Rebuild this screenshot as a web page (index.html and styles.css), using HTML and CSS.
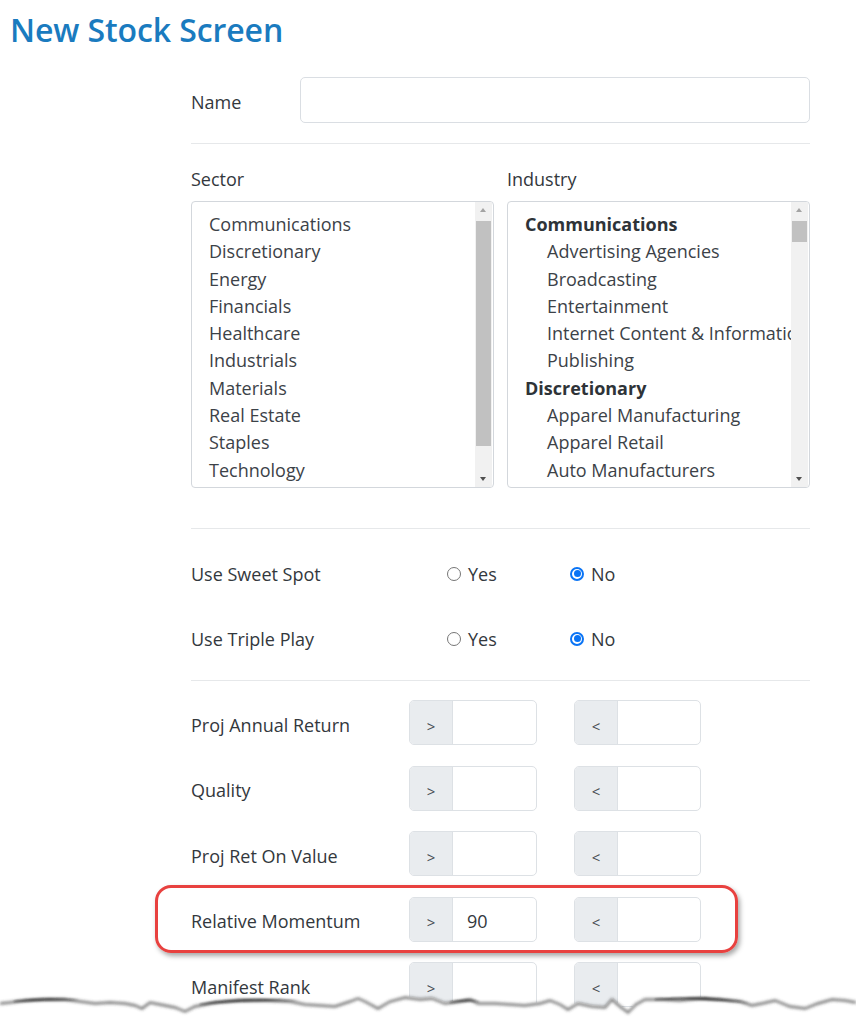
FILE: index.html
```html
<!DOCTYPE html>
<html lang="en">
<head>
<meta charset="utf-8">
<title>New Stock Screen</title>
<link rel="stylesheet" href="styles.css">
</head>
<body>
<div class="page">
  <h1 class="title">New Stock Screen</h1>
  <div class="form">
    <div class="name-row">
      <div class="lbl">Name</div>
      <div class="text-input"></div>
    </div>
    <div class="sep sep-name"></div>
    <div class="lists">
      <div class="list-col">
        <div class="lbl list-lbl">Sector</div>
        <div class="listbox">
          <div class="options">
            <div class="opt">Communications</div>
            <div class="opt">Discretionary</div>
            <div class="opt">Energy</div>
            <div class="opt">Financials</div>
            <div class="opt">Healthcare</div>
            <div class="opt">Industrials</div>
            <div class="opt">Materials</div>
            <div class="opt">Real Estate</div>
            <div class="opt">Staples</div>
            <div class="opt">Technology</div>
            <div class="opt">Utilities</div>
          </div>
          <div class="scrollbar">
            <div class="arrow up"></div>
            <div class="track"><div class="thumb thumb-sector"></div></div>
            <div class="arrow down"></div>
          </div>
        </div>
      </div>
      <div class="list-col">
        <div class="lbl list-lbl">Industry</div>
        <div class="listbox">
          <div class="options">
            <div class="grp">Communications</div>
            <div class="opt sub">Advertising Agencies</div>
            <div class="opt sub">Broadcasting</div>
            <div class="opt sub">Entertainment</div>
            <div class="opt sub">Internet Content &amp; Information</div>
            <div class="opt sub">Publishing</div>
            <div class="grp">Discretionary</div>
            <div class="opt sub">Apparel Manufacturing</div>
            <div class="opt sub">Apparel Retail</div>
            <div class="opt sub">Auto Manufacturers</div>
            <div class="opt sub">Auto Parts</div>
          </div>
          <div class="scrollbar">
            <div class="arrow up"></div>
            <div class="track"><div class="thumb thumb-industry"></div></div>
            <div class="arrow down"></div>
          </div>
        </div>
      </div>
    </div>
    <div class="sep sep-lists"></div>
    <div class="radio-row">
      <div class="lbl">Use Sweet Spot</div>
      <div class="choice"><span class="radio"></span><span class="lbl">Yes</span></div>
      <div class="choice"><span class="radio on"></span><span class="lbl">No</span></div>
    </div>
    <div class="radio-row">
      <div class="lbl">Use Triple Play</div>
      <div class="choice"><span class="radio"></span><span class="lbl">Yes</span></div>
      <div class="choice"><span class="radio on"></span><span class="lbl">No</span></div>
    </div>
    <div class="sep sep-radios"></div>
    <div class="range-rows">
      <div class="range-row">
        <div class="lbl">Proj Annual Return</div>
        <div class="igroup"><span class="pre">&gt;</span><span class="val"></span></div>
        <div class="igroup"><span class="pre">&lt;</span><span class="val"></span></div>
      </div>
      <div class="range-row">
        <div class="lbl">Quality</div>
        <div class="igroup"><span class="pre">&gt;</span><span class="val"></span></div>
        <div class="igroup"><span class="pre">&lt;</span><span class="val"></span></div>
      </div>
      <div class="range-row">
        <div class="lbl">Proj Ret On Value</div>
        <div class="igroup"><span class="pre">&gt;</span><span class="val"></span></div>
        <div class="igroup"><span class="pre">&lt;</span><span class="val"></span></div>
      </div>
      <div class="range-row highlighted">
        <div class="lbl">Relative Momentum</div>
        <div class="igroup"><span class="pre">&gt;</span><span class="val">90</span></div>
        <div class="igroup"><span class="pre">&lt;</span><span class="val"></span></div>
        <div class="annotation"></div>
      </div>
      <div class="range-row">
        <div class="lbl">Manifest Rank</div>
        <div class="igroup"><span class="pre">&gt;</span><span class="val"></span></div>
        <div class="igroup"><span class="pre">&lt;</span><span class="val"></span></div>
      </div>
    </div>
  </div>
</div>
<svg class="tear" width="856" height="45" viewBox="0 0 856 45" xmlns="http://www.w3.org/2000/svg">
  <defs>
    <filter id="blur" x="-5%" y="-100%" width="110%" height="300%">
      <feGaussianBlur stdDeviation="1.4"/>
    </filter>
    <filter id="blur2" x="-5%" y="-100%" width="110%" height="300%">
      <feGaussianBlur stdDeviation="1"/>
    </filter>
  </defs>
  <path fill="#ffffff" d="M0 17 L10 16 L25 14 L45 13 L65 13 L80 15 L95 17 L110 16 L125 17 L135 19 L142 22 L150 16 L160 18 L175 21 L185 25 L195 20 L215 16 L240 14 L265 14 L290 15 L305 18 L320 19 L335 20 L350 15 L358 12 L365 15 L378 22 L390 15 L405 11 L420 13 L432 12 L445 17 L460 15 L470 13 L478 17 L495 17 L510 18 L525 19 L540 17 L550 14 L560 18 L568 23 L578 17 L592 20 L605 21 L612 13 L620 20 L628 26 L636 18 L645 13 L660 13 L680 14 L700 12 L720 13 L740 15 L752 19 L762 17 L775 14 L790 20 L805 22 L818 17 L832 13 L845 14 L856 16 L856 45 L0 45 Z"/>
  <path fill="none" stroke="rgba(60,60,60,0.7)" stroke-width="2.4" filter="url(#blur)" transform="translate(0 1.5)" d="M0 17 L10 16 L25 14 L45 13 L65 13 L80 15 L95 17 L110 16 L125 17 L135 19 L142 22 L150 16 L160 18 L175 21 L185 25 L195 20 L215 16 L240 14 L265 14 L290 15 L305 18 L320 19 L335 20 L350 15 L358 12 L365 15 L378 22 L390 15 L405 11 L420 13 L432 12 L445 17 L460 15 L470 13 L478 17 L495 17 L510 18 L525 19 L540 17 L550 14 L560 18 L568 23 L578 17 L592 20 L605 21 L612 13 L620 20 L628 26 L636 18 L645 13 L660 13 L680 14 L700 12 L720 13 L740 15 L752 19 L762 17 L775 14 L790 20 L805 22 L818 17 L832 13 L845 14 L856 16"/>
  <g fill="rgba(30,30,30,0.85)" filter="url(#blur2)">
    <path d="M14 16 Q45 11 80 15 Q45 15 14 17 Z"/>
    <path d="M200 19 Q245 11 300 16 Q245 15 200 20 Z"/>
    <path d="M450 17 Q470 12 480 17 Q470 15 450 18 Z"/>
    <path d="M655 14 Q705 9 750 18 Q705 13 655 15 Z"/>
  </g>
</svg>
</body>
</html>
```

FILE: styles.css
```css
* { box-sizing: border-box; }
html, body {
  margin: 0;
  padding: 0;
  background: #ffffff;
}
body {
  font-family: "Open Sans", "Noto Sans", "Liberation Sans", sans-serif;
  font-size: 18px;
  color: #33383d;
  width: 856px;
  height: 1020px;
  overflow: hidden;
  position: relative;
}
.page {
  padding: 11px 0 0 10px;
}
.title {
  margin: 0;
  font-size: 32px;
  font-weight: 600;
  line-height: 38px;
  color: #1a7bbf;
  letter-spacing: -0.1px;
}
.form {
  margin-left: 181px;
  width: 619px;
  margin-top: 28px;
}
.lbl {
  line-height: 27px;
  color: #33383d;
}
.name-row {
  display: flex;
  align-items: center;
}
.name-row > .lbl {
  width: 109px;
  padding-top: 4px;
}
.text-input {
  flex: 1;
  height: 46px;
  border: 1px solid #dadee3;
  border-radius: 5px;
  background: #fff;
}
.sep {
  height: 1px;
  background: #e6e8ea;
}
.sep-name { margin-top: 20px; }
.lists {
  display: grid;
  grid-template-columns: minmax(0, 1fr) minmax(0, 1fr);
  column-gap: 13px;
  margin-top: 22px;
}
.list-col { min-width: 0; }
.list-lbl {
  margin-bottom: 8px;
}
.listbox {
  height: 287px;
  border: 1px solid #d3d7dc;
  border-radius: 4px;
  display: flex;
  overflow: hidden;
  background: #fff;
}
.options {
  flex: 1;
  min-width: 0;
  padding: 9px 0 0 17px;
  overflow: hidden;
  white-space: nowrap;
  color: #3c4248;
}
.opt, .grp {
  line-height: 27.3px;
}
.grp {
  font-weight: 700;
  color: #2e3338;
}
.sub {
  padding-left: 22px;
}
.scrollbar {
  width: 17px;
  flex: none;
  margin-right: 1px;
  background: #f1f1f1;
  display: flex;
  flex-direction: column;
}
.arrow {
  height: 17px;
  position: relative;
}
.arrow::after {
  content: "";
  position: absolute;
  left: 5px;
  top: 6px;
  border-left: 3.5px solid transparent;
  border-right: 3.5px solid transparent;
}
.arrow.up::after { border-bottom: 4px solid #a3a3a3; }
.arrow.down::after { border-top: 4px solid #505050; top: 7px; }
.track {
  flex: 1;
  padding: 2px 1px;
}
.thumb {
  background: #c1c1c1;
}
.thumb-sector { height: 225px; }
.thumb-industry { height: 21px; }
.sep-lists { margin-top: 40px; }
.radio-row {
  display: grid;
  grid-template-columns: 256px 123px auto;
  align-items: center;
  height: 45px;
  margin-top: 20px;
}
.radio-row .lbl { padding-top: 2px; }
.sep-lists + .radio-row { margin-top: 22px; }
.choice {
  display: flex;
  align-items: center;
  gap: 7px;
}
.radio {
  width: 14px;
  height: 14px;
  border-radius: 50%;
  border: 1px solid #767676;
  background: #fff;
}
.radio.on {
  border: 2px solid #0a74f5;
  position: relative;
}
.radio.on::after {
  content: "";
  position: absolute;
  left: 1.5px;
  top: 1.5px;
  width: 7px;
  height: 7px;
  border-radius: 50%;
  background: #0a74f5;
}
.sep-radios { margin-top: 19px; }
.range-rows {
  display: flex;
  flex-direction: column;
  gap: 20.5px;
  margin-top: 19px;
}
.range-row {
  display: grid;
  grid-template-columns: 218px 128px 164px;
  align-items: center;
  height: 45px;
  position: relative;
}
.range-row > .lbl { padding-top: 5px; }
.range-row .igroup + .igroup {
  margin-left: 37px;
}
.igroup {
  display: flex;
  height: 45px;
  border: 1px solid #dde1e5;
  border-radius: 5px;
  overflow: hidden;
  background: #fff;
}
.pre {
  width: 43px;
  background: #e9ecef;
  border-right: 1px solid #dde1e5;
  display: flex;
  align-items: center;
  justify-content: center;
  font-size: 15px;
  color: #464c52;
  padding-top: 6px;
}
.val {
  flex: 1;
  display: flex;
  align-items: center;
  padding-left: 14px;
  padding-top: 4px;
  color: #33383d;
}
.annotation {
  position: absolute;
  left: -36px;
  top: -12px;
  width: 583px;
  height: 68px;
  border: 3.5px solid #e8413f;
  border-radius: 16px;
  box-shadow: 2px 3px 5px rgba(0, 0, 0, 0.35);
  pointer-events: none;
}
.tear {
  position: absolute;
  left: 0;
  top: 985px;
  display: block;
}
```
